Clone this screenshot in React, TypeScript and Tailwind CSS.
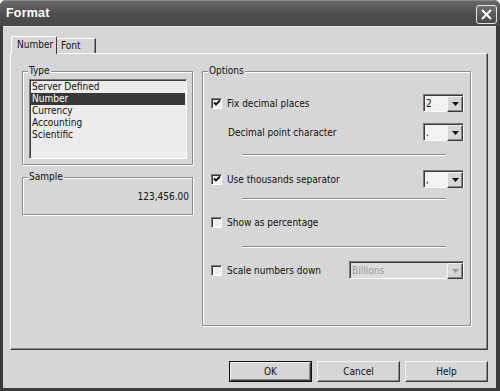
import React from "react";

const F = "font-['DejaVu_Sans_Condensed','DejaVu_Sans',sans-serif] [font-stretch:condensed]";

function Check({ checked }: { checked?: boolean }) {
  return (
    <div className="w-[11px] h-[11px] shrink-0 border border-t-[#7c7c7c] border-l-[#7c7c7c] border-r-white border-b-white shadow-[inset_1px_1px_0_#3c3c3c] bg-[#f0f0f0] flex items-center justify-center">
      {checked && (
        <svg width="8" height="8" viewBox="0 0 8 8">
          <path d="M1 3.5 L3 5.5 L7 1.5" stroke="#111" strokeWidth="1.8" fill="none" />
        </svg>
      )}
    </div>
  );
}

function Drop({ value, w, disabled }: { value: string; w: string; disabled?: boolean }) {
  return (
    <div className={`${w} h-[18px] flex border border-t-[#7c7c7c] border-l-[#7c7c7c] border-r-white border-b-white shadow-[inset_1px_1px_0_#3c3c3c] ${disabled ? "bg-[#dcdcdc]" : "bg-[#f2f2f2]"}`}>
      <div className={`flex-1 pl-[2px] pt-[1px] leading-[15px] ${disabled ? "text-[#9a9a9a]" : "text-[#111]"}`}>{value}</div>
      <div className="w-[16px] h-[16px] mt-[1px] bg-[#d6d6d6] border border-t-[#f4f4f4] border-l-[#f4f4f4] border-r-[#3a3a3a] border-b-[#3a3a3a] shadow-[inset_-1px_-1px_0_#8a8a8a] flex items-center justify-center">
        <svg width="7" height="4" viewBox="0 0 7 4">
          <path d="M0 0 H7 L3.5 4 Z" fill={disabled ? "#9a9a9a" : "#111"} />
        </svg>
      </div>
    </div>
  );
}

function Sep({ mt }: { mt: string }) {
  return <div className={`${mt} ml-[31px] w-[204px] h-[2px] border-t border-t-[#8e8e8e] border-b border-b-white`} />;
}

function Group({ title, className, children }: { title: string; className: string; children?: React.ReactNode }) {
  return (
    <div className={`relative border border-[#8e8e8e] shadow-[inset_1px_1px_0_#fff,1px_1px_0_#fff] ${className}`}>
      <span className="absolute -top-[8px] left-[5px] px-[1px] bg-[#d6d6d6] leading-[14px] text-[#111]">{title}</span>
      {children}
    </div>
  );
}

function Btn({ label, def }: { label: string; def?: boolean }) {
  return (
    <div className={`w-[83px] h-[21px] ${def ? "border border-[#111]" : ""}`}>
      <div className="w-full h-full bg-[#d6d6d6] border border-t-[#f4f4f4] border-l-[#f4f4f4] border-r-[#3a3a3a] border-b-[#3a3a3a] shadow-[inset_-1px_-1px_0_#8a8a8a] flex items-center justify-center text-[#111]">
        {label}
      </div>
    </div>
  );
}

export default function App() {
  return (
    <div className={`w-[500px] h-[391px] bg-[#3a3a3a] rounded-t-[6px] flex flex-col text-[10px] ${F}`}>
      <div className="h-[26px] shrink-0 rounded-t-[6px] border-t border-t-[#8a8a8a] bg-gradient-to-b from-[#6a6a6a] via-[#4e4e4e] to-[#474747] flex items-center justify-between pl-[6px] pr-[3px]">
        <span className="text-white font-bold text-[12.5px] font-['Liberation_Sans',sans-serif] [font-stretch:normal] tracking-[0.2px]">Format</span>
        <div className="w-[21px] h-[19px] rounded-[3px] border border-[#e6e6e6] bg-gradient-to-b from-[#707070] to-[#4a4a4a] flex items-center justify-center mt-[1px]">
          <svg width="11" height="11" viewBox="0 0 11 11">
            <path d="M1 1 L10 10 M10 1 L1 10" stroke="#fff" strokeWidth="2" />
          </svg>
        </div>
      </div>
      <div className="flex-1 ml-[3px] mr-[4px] mb-[3px] bg-[#d6d6d6] border-t border-t-[#e8e8e8] flex flex-col pt-[8px] pl-[7px] pr-[8px]">
        <div className="flex items-end h-[18px] pl-[1px] relative z-10">
          <div className="w-[46px] h-[18px] -mb-[1px] pl-[5px] bg-[#d6d6d6] border-t border-l border-white border-r border-r-[#3a3a3a] rounded-t-[2px] leading-[15px] text-[#111]">Number</div>
          <div className="w-[39px] h-[15px] pl-[4px] border-t border-t-white border-r border-r-[#3a3a3a] shadow-[inset_-1px_0_0_#8a8a8a] leading-[14px] text-[#111]">Font</div>
        </div>
        <div className="h-[297px] border-t border-l border-white border-r border-b border-r-[#3a3a3a] border-b-[#3a3a3a] shadow-[inset_-1px_-1px_0_#8a8a8a] flex pt-[17px] pl-[11px] gap-[9px]">
          <div className="w-[171px] flex flex-col">
            <Group title="Type" className="h-[94px]">
              <div className="mt-[7px] ml-[6px] w-[158px] h-[80px] border border-t-[#7c7c7c] border-l-[#7c7c7c] border-r-white border-b-white shadow-[inset_1px_1px_0_#3c3c3c] bg-[#ececec] pt-[1px] pl-[1px] pr-[1px] text-[#111]">
                <div className="h-[12px] leading-[12px] pl-[1px]">Server Defined</div>
                <div className="h-[12px] leading-[12px] pl-[1px] bg-[#383838] text-white">Number</div>
                <div className="h-[12px] leading-[12px] pl-[1px]">Currency</div>
                <div className="h-[12px] leading-[12px] pl-[1px]">Accounting</div>
                <div className="h-[12px] leading-[12px] pl-[1px]">Scientific</div>
              </div>
            </Group>
            <Group title="Sample" className="h-[38px] mt-[12px]">
              <div className="h-full flex items-center justify-end pr-[3px] pt-[1px] text-[#111]">123,456.00</div>
            </Group>
          </div>
          <Group title="Options" className="w-[269px] h-[255px]">
            <div className="flex flex-col pl-[8px] pr-[6px] text-[#111]">
              <div className="mt-[22px] h-[18px] flex items-center">
                <Check checked />
                <span className="ml-[5px] flex-1">Fix decimal places</span>
                <Drop value="2" w="w-[41px]" />
              </div>
              <div className="mt-[11px] h-[18px] flex items-center">
                <span className="ml-[17px] flex-1">Decimal point character</span>
                <Drop value="." w="w-[41px]" />
              </div>
              <Sep mt="mt-[13px]" />
              <div className="mt-[14px] h-[18px] flex items-center">
                <Check checked />
                <span className="ml-[5px] flex-1">Use thousands separator</span>
                <Drop value="," w="w-[41px]" />
              </div>
              <Sep mt="mt-[10px]" />
              <div className="mt-[13px] h-[18px] flex items-center">
                <Check />
                <span className="ml-[5px] flex-1">Show as percentage</span>
              </div>
              <Sep mt="mt-[15px]" />
              <div className="mt-[13px] h-[18px] flex items-center">
                <Check />
                <span className="ml-[5px] flex-1">Scale numbers down</span>
                <Drop value="Billions" w="w-[115px]" disabled />
              </div>
            </div>
          </Group>
        </div>
        <div className="mt-[11px] flex justify-end gap-[5px]">
          <Btn label="OK" def />
          <Btn label="Cancel" />
          <Btn label="Help" />
        </div>
      </div>
    </div>
  );
}
